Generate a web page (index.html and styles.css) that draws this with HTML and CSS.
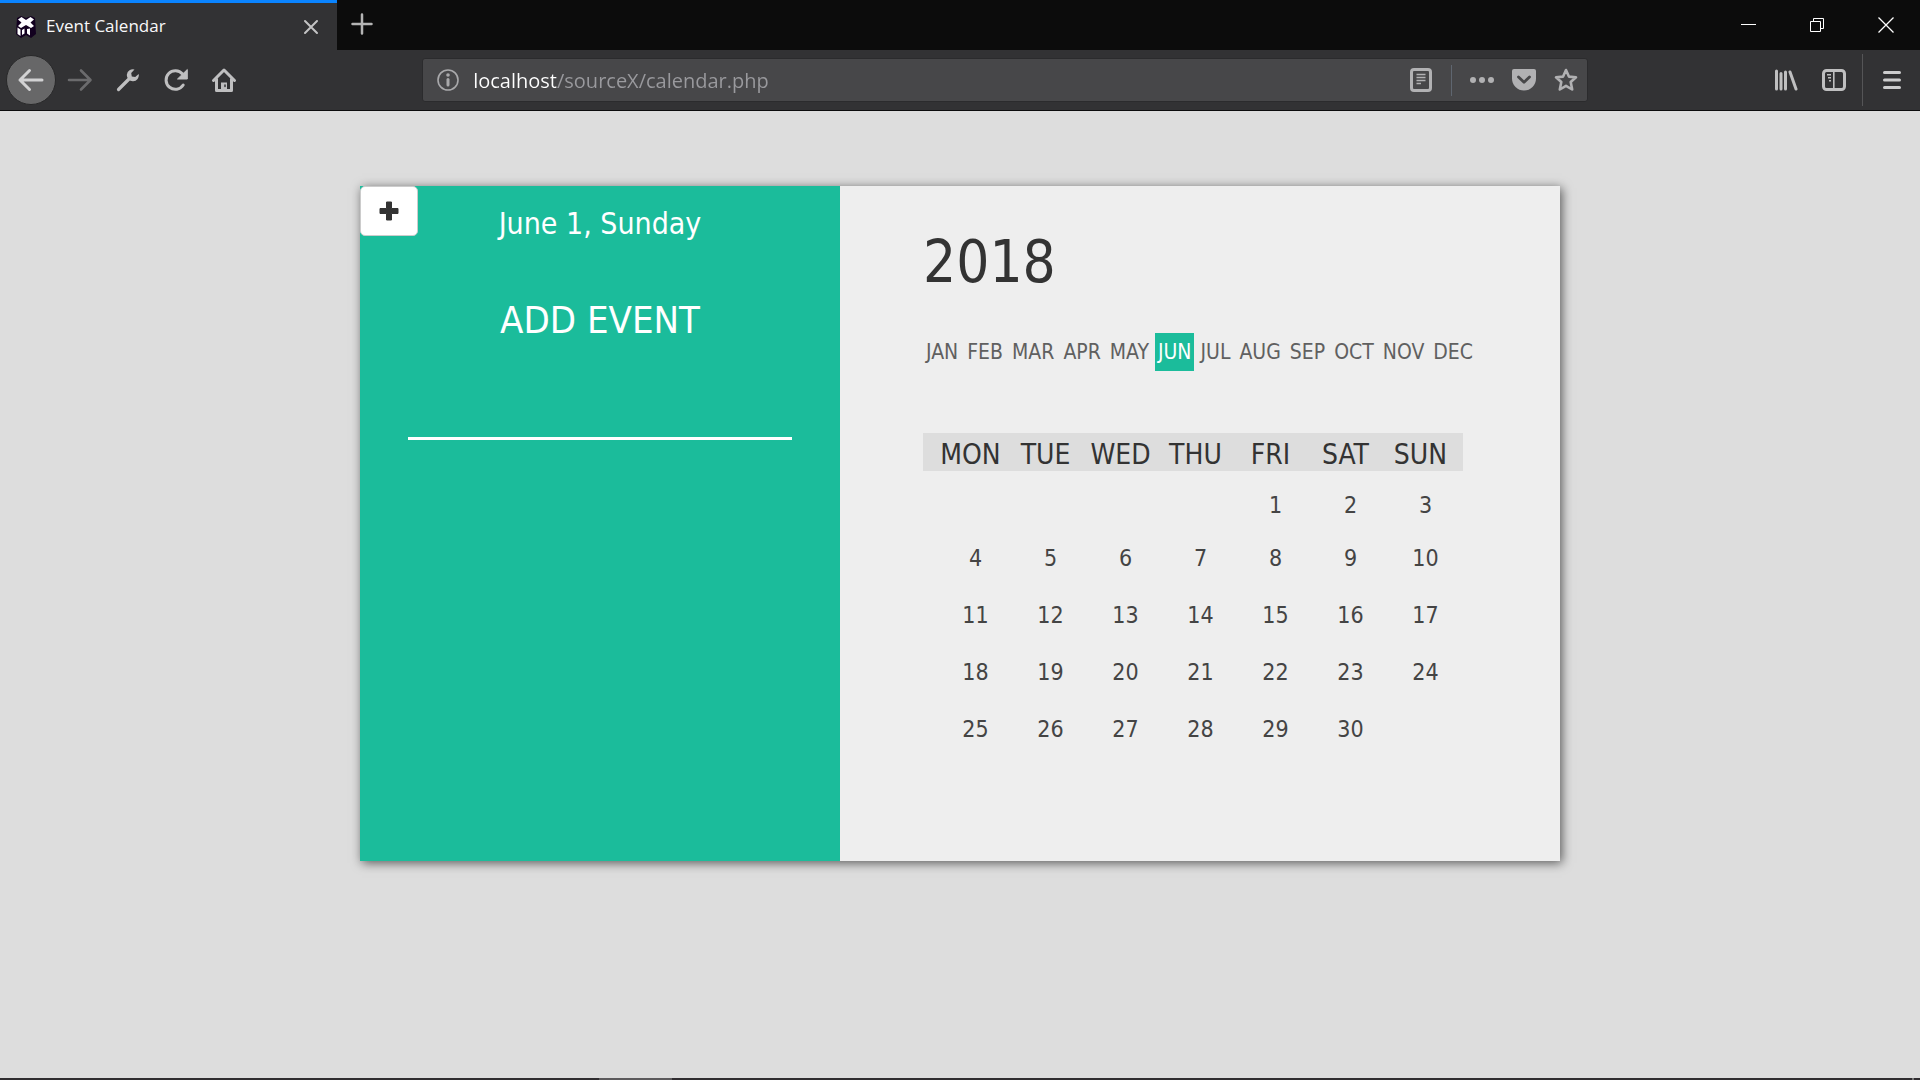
FILE: index.html
```html
<!DOCTYPE html>
<html lang="en">
<head>
<meta charset="utf-8">
<meta name="viewport" content="width=device-width, initial-scale=1">
<title>Event Calendar</title>
<link rel="stylesheet" href="styles.css">
</head>
<body>
<header class="browser">
  <div class="tabbar">
    <div class="tab">
      <svg class="favicon" width="20" height="22" viewBox="0 0 20 22" aria-hidden="true">
        <path d="M1 2L5 0L10 2L15 0L19 2L20 18L15 22L10 19L5 22L0 18Z" fill="#12001f"/>
        <path d="M2 3.500L5.500 1L10 4L14.500 1L18 3.500L14.500 6.500L18 10L15 12L10 9L5 12L2 10L5.500 6.500Z" fill="#fff"/>
        <path d="M1.500 11.500L4.500 13.500V20L1.500 18ZM11 13L14 12.500V19.500L11 17.500ZM6 14L8.500 12.500V17.500L6 19Z" fill="#fff"/>
      </svg>
      <span class="tab-title">Event Calendar</span>
      <button class="tab-close" type="button" aria-label="Close tab">
        <svg width="16" height="16" viewBox="0 0 16 16"><path d="M2 2L14 14M14 2L2 14" stroke="#c3c3c4" stroke-width="2" stroke-linecap="round"/></svg>
      </button>
    </div>
    <button class="new-tab" type="button" aria-label="New tab">
      <svg width="22" height="22" viewBox="0 0 22 22"><path d="M11 1.500V20.500M1.500 11H20.500" stroke="#b4b4b4" stroke-width="2.500" stroke-linecap="round"/></svg>
    </button>
    <div class="window-controls">
      <button type="button" aria-label="Minimize"><svg width="16" height="16" viewBox="0 0 16 16"><path d="M1 7.500H16" stroke="#fff"/></svg></button>
      <button type="button" aria-label="Restore"><svg width="16" height="16" viewBox="0 0 16 16" fill="none" stroke="#fff"><path d="M1.500 4.500H11.500V14.500H1.500ZM4.500 4.500V1.500H14.500V11.500H11.500"/></svg></button>
      <button type="button" aria-label="Close"><svg width="16" height="16" viewBox="0 0 16 16"><path d="M0.500 0.500L15.500 15.500M15.500 0.500L0.500 15.500" stroke="#fff" stroke-width="1.300"/></svg></button>
    </div>
  </div>
  <nav class="toolbar" aria-label="Navigation">
    <button class="back" type="button" aria-label="Back">
      <svg width="28" height="24" viewBox="0 0 28 24" fill="none" stroke="#d2d2d3" stroke-width="3" stroke-linecap="round" stroke-linejoin="round"><path d="M25 12H3M12.500 2.500L3 12L12.500 21.500"/></svg>
    </button>
    <button class="tool" type="button" aria-label="Forward">
      <svg width="26" height="24" viewBox="0 0 26 24" fill="none" stroke="#6b6b6d" stroke-width="2.600" stroke-linecap="round" stroke-linejoin="round"><path d="M2 12H23M14 2.500L23.500 12L14 21.500"/></svg>
    </button>
    <button class="tool" type="button" aria-label="Developer tools">
      <svg width="24" height="24" viewBox="0 0 24 24"><path d="M2.500 21.500L13 11" stroke="#bfbfc0" stroke-width="3.200" stroke-linecap="round"/><path d="M18.500 1.500A6 6 0 1 0 22.700 6L19.200 9L15.800 8.400L15.200 5Z" fill="#bfbfc0"/></svg>
    </button>
    <button class="tool" type="button" aria-label="Reload">
      <svg width="26" height="24" viewBox="0 0 26 24"><path d="M20.200 17A9.300 9.300 0 1 1 19.500 6" fill="none" stroke="#bfbfc0" stroke-width="3" stroke-linecap="round"/><path d="M24.300 1.500V11H14.500Z" fill="#bfbfc0" stroke="#bfbfc0" stroke-linejoin="round"/></svg>
    </button>
    <button class="tool" type="button" aria-label="Home">
      <svg width="26" height="26" viewBox="0 0 26 26" fill="none" stroke="#bfbfc0" stroke-width="3" stroke-linecap="round" stroke-linejoin="round"><path d="M2.500 13.500L13 3L23.500 13.500M5.500 12V23.500H20.500V12"/><path d="M10 22V15.500H16V22Z" fill="#bfbfc0" stroke="none"/><path d="M14 18V19.500" stroke="#323234" stroke-width="1.500"/></svg>
    </button>
    <div class="spacer"></div>
    <div class="urlbar">
      <svg width="22" height="22" viewBox="0 0 22 22" aria-hidden="true"><circle cx="11" cy="11" r="10" fill="none" stroke="#a9a9ab" stroke-width="1.600"/><circle cx="11" cy="6" r="1.800" fill="#a9a9ab"/><path d="M11 10.500V16" stroke="#a9a9ab" stroke-width="3" stroke-linecap="round"/></svg>
      <input class="url" type="text" aria-label="Address" value="localhost/sourceX/calendar.php" spellcheck="false">
      <button class="page-action" type="button" aria-label="Reader view">
        <svg width="22" height="24" viewBox="0 0 22 24" fill="none" stroke="#b1b1b3"><rect x="1.500" y="1.500" width="19" height="21" rx="2.500" stroke-width="3"/><path d="M6.500 6.500H15.500M6.500 9.500H15.500M6.500 12.500H15.500M6.500 15.500H11" stroke-width="1.500"/></svg>
      </button>
      <span class="divider"></span>
      <button class="page-action" type="button" aria-label="Page actions">
        <svg width="24" height="8" viewBox="0 0 24 8" fill="#b1b1b3"><circle cx="3" cy="4" r="3"/><circle cx="12" cy="4" r="3"/><circle cx="21" cy="4" r="3"/></svg>
      </button>
      <button class="page-action" type="button" aria-label="Save to Pocket">
        <svg width="24" height="22" viewBox="0 0 24 22"><path d="M2 0H22Q24 0 24 2V9.500A12 12 0 0 1 0 9.500V2Q0 0 2 0Z" fill="#b1b1b3"/><path d="M6.500 8L12 13.300L17.500 8" fill="none" stroke="#474749" stroke-width="2.800" stroke-linecap="round" stroke-linejoin="round"/></svg>
      </button>
      <button class="page-action" type="button" aria-label="Bookmark">
        <svg width="24" height="24" viewBox="0 0 24 24"><path d="M12 2L14.900 8.600L22 9.300L16.700 14L18.200 21.500L12 17.800L5.800 21.500L7.300 14L2 9.300L9.100 8.600Z" fill="none" stroke="#b1b1b3" stroke-width="2.600" stroke-linejoin="round"/></svg>
      </button>
    </div>
    <div class="spacer"></div>
    <button class="tool" type="button" aria-label="Library">
      <svg width="24" height="22" viewBox="0 0 24 22" fill="none" stroke="#bfbfc0" stroke-width="3" stroke-linecap="round"><path d="M2.500 2V20M7 4.500V20M11.500 3V20M16 3L22 20"/></svg>
    </button>
    <button class="tool" type="button" aria-label="Sidebars">
      <svg width="24" height="22" viewBox="0 0 24 22" fill="none" stroke="#bfbfc0"><rect x="1.500" y="1.500" width="21" height="19" rx="3" stroke-width="3"/><path d="M11.800 2V20" stroke-width="1.600"/><path d="M5 5.800H9M6 8.800H9M7 11.800H9" stroke-width="1.500"/></svg>
    </button>
    <span class="divider divider-tall"></span>
    <button class="tool" type="button" aria-label="Menu">
      <svg width="20" height="20" viewBox="0 0 20 20" stroke="#cdcdce" stroke-width="3" stroke-linecap="round"><path d="M2.500 2.500H17.500M2.500 10H17.500M2.500 17.500H17.500"/></svg>
    </button>
  </nav>
</header>
<main class="page">
  <div class="calendar">
    <section class="events">
      <button class="add" type="button" aria-label="Add event">
        <svg width="20" height="20" viewBox="0 0 20 20"><path d="M7.500 1H12.500V7.500H19V12.500H12.500V19H7.500V12.500H1V7.500H7.500Z" fill="#333" stroke="#333" stroke-linejoin="round"/></svg>
      </button>
      <p class="date">June 1, Sunday</p>
      <label class="prompt" for="event">ADD EVENT</label>
      <input class="event-input" id="event" type="text">
    </section>
    <section class="overview">
      <h1 class="year">2018</h1>
      <nav class="months" aria-label="Months">
        <a href="#">JAN</a><a href="#">FEB</a><a href="#">MAR</a><a href="#">APR</a><a href="#">MAY</a><a class="current" href="#">JUN</a><a href="#">JUL</a><a href="#">AUG</a><a href="#">SEP</a><a href="#">OCT</a><a href="#">NOV</a><a href="#">DEC</a>
      </nav>
      <table class="days">
        <thead><tr><th>MON</th><th>TUE</th><th>WED</th><th>THU</th><th>FRI</th><th>SAT</th><th>SUN</th></tr></thead>
        <tbody>
          <tr><td></td><td></td><td></td><td></td><td>1</td><td>2</td><td>3</td></tr>
          <tr><td>4</td><td>5</td><td>6</td><td>7</td><td>8</td><td>9</td><td>10</td></tr>
          <tr><td>11</td><td>12</td><td>13</td><td>14</td><td>15</td><td>16</td><td>17</td></tr>
          <tr><td>18</td><td>19</td><td>20</td><td>21</td><td>22</td><td>23</td><td>24</td></tr>
          <tr><td>25</td><td>26</td><td>27</td><td>28</td><td>29</td><td>30</td><td></td></tr>
        </tbody>
      </table>
    </section>
  </div>
</main>
<footer class="taskbar"><span class="task"></span><span class="show-desktop"></span></footer>
</body>
</html>
```
FILE: styles.css
```css
* { box-sizing: border-box; }

body {
  margin: 0;
  min-height: 100vh;
  display: flex;
  flex-direction: column;
  background: #ddd;
  font-family: Tahoma, "DejaVu Sans Condensed", "DejaVu Sans", sans-serif;
}

button {
  display: flex;
  align-items: center;
  justify-content: center;
  padding: 0;
  border: 0;
  background: none;
}

svg { display: block; flex: none; }

/* Browser window */
.browser { font-family: "Segoe UI", "Open Sans", "Noto Sans", sans-serif; }

.tabbar {
  display: flex;
  height: 50px;
  background: #0c0c0c;
}

.tab {
  display: flex;
  align-items: center;
  width: 337px;
  padding: 0 16px;
  border-top: 3px solid #0a84ff;
  background: #323234;
}

.tab-title {
  flex: 1;
  padding: 0 0 2px 10px;
  font-size: 17px;
  color: #f9f9fa;
}

.tab-close { width: 20px; height: 20px; }
.new-tab { width: 50px; height: 48px; }
.window-controls { display: flex; margin-left: auto; }
.window-controls button { width: 69px; }

.toolbar {
  display: flex;
  align-items: center;
  height: 61px;
  padding: 0 4px 0 6px;
  background: #323234;
  border-bottom: 1px solid #0c0c0d;
}

.back {
  width: 50px;
  height: 50px;
  border: 1px solid #282829;
  border-radius: 50%;
  background: #676768;
}

.tool { width: 48px; height: 48px; }
.spacer { flex: 20; }

.urlbar {
  flex: 132;
  display: flex;
  align-items: center;
  height: 44px;
  padding: 0 0 0 14px;
  border: 1px solid #2b2b2d;
  border-radius: 3px;
  background: #474749;
}

.url {
  flex: 1;
  min-width: 0;
  height: 40px;
  margin-left: 14px;
  padding: 0;
  border: 0;
  outline: 0;
  font: 20px "Segoe UI", "Open Sans", "Noto Sans", sans-serif;
  /* host in white, path in grey */
  background: linear-gradient(90deg, #fff 84px, #9a9a9e 84px);
  -webkit-background-clip: text;
  background-clip: text;
  color: transparent;
}

.page-action { width: 42px; height: 40px; }

.divider {
  width: 1px;
  height: 31px;
  margin: 0 9px;
  background: #5f6670;
}

.divider-tall {
  height: 52px;
  margin: 0 5px 0 4px;
  background: #555557;
}

/* Calendar */
.page { flex: 1; padding: 75px 24px; }

.calendar {
  display: grid;
  grid-template-columns: 2fr 3fr;
  max-width: 1200px;
  margin: 0 auto;
  box-shadow: 2px 2px 10px rgba(0, 0, 0, .6);
}

.events {
  position: relative;
  display: flex;
  flex-direction: column;
  align-items: center;
  padding: 18px 48px;
  background: #1bbc9b;
  color: #fff;
}

.add {
  position: absolute;
  top: 0;
  left: 0;
  width: 58px;
  height: 50px;
  border: 1px solid #ccc;
  border-radius: 5px;
  background: #fff;
}

.date { margin: 0; font-size: 30px; line-height: 40px; }
.prompt { margin-top: 52px; font-size: 38px; line-height: 48px; }

.event-input {
  width: 100%;
  height: 48px;
  margin-top: 48px;
  padding: 0;
  border: 0;
  border-bottom: 3px solid #fff;
  outline: 0;
  background: none;
  color: #fff;
  font-size: 28px;
}

.overview { padding: 40px 72px 104px 83px; background: #eee; }

.year {
  margin: 0;
  font-size: 58px;
  font-weight: 400;
  line-height: 72px;
  color: #333;
}

.months { display: flex; gap: 3px; margin-top: 35px; }

.months a {
  padding: 1px 3px 0;
  font-size: 21px;
  line-height: 37px;
  color: #606060;
  text-decoration: none;
}

.months .current { background: #1bbc9b; color: #fff; }

.days {
  width: 540px;
  margin-top: 62px;
  border-collapse: collapse;
  table-layout: fixed;
}

.days thead { background: #ddd; }

.days th {
  width: 75px;
  height: 38px;
  padding: 6px 0 0;
  font-size: 28px;
  font-weight: 400;
  line-height: 32px;
  color: #333;
}

.days td {
  height: 57px;
  padding: 0 0 0 10px;
  font-size: 23px;
  text-align: center;
  color: #444;
}

.days th:first-child { width: 85px; padding-left: 10px; }
.days th:last-child { width: 80px; padding-right: 5px; }
.days td:first-child { padding-left: 20px; }
.days td:last-child { padding-right: 5px; }
.days tbody tr:first-child td { height: 58px; padding-top: 10px; }

/* Edge of the desktop taskbar */
.taskbar {
  display: flex;
  justify-content: space-between;
  height: 2px;
  padding: 0 6px 0 599px;
  background: #302d30;
}

.task { width: 73px; background: #5c5a5c; }
.show-desktop { width: 2px; background: #777; }
```
